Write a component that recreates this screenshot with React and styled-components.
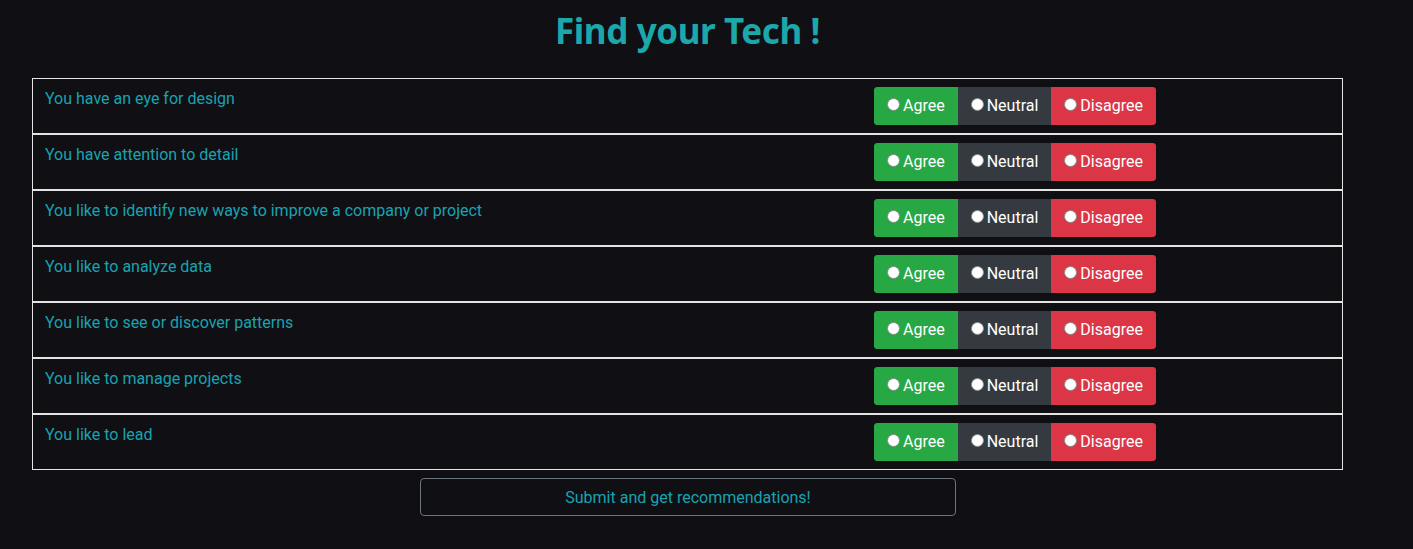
import React from 'react'
import styled, { createGlobalStyle } from 'styled-components'

const GlobalStyle = createGlobalStyle`
    body {
        margin: 0;
        background: #0f0f14;
        font-family: Roboto, "Liberation Sans", sans-serif;
    }
`

const Page = styled.div`
    width: 1311px;
    margin-left: 32px;
    padding-top: 8px;
`

const Title = styled.h1`
    margin: 0 0 24px;
    text-align: center;
    color: #1ca7ab;
    font-family: "Noto Sans", "Open Sans", sans-serif;
    font-weight: 700;
    font-size: 35px;
    line-height: 46px;
    letter-spacing: -0.4px;
`

const Table = styled.div`
    display: flex;
    flex-direction: column;
`

const Row = styled.div`
    display: grid;
    grid-template-columns: 829px 1fr;
    border: 1px solid #e4e4e4;
    padding: 8px 12px;
    height: 56px;
    box-sizing: border-box;
`

const Question = styled.div`
    color: #19a3b0;
    font-size: 16px;
    line-height: 24px;
`

const Group = styled.div`
    display: flex;
    align-self: start;
    border-radius: 4px;
    overflow: hidden;
    width: max-content;
`

const colors = {
    success: '#28a745',
    dark: '#343a40',
    danger: '#dc3545',
}

const Choice = styled.label`
    display: flex;
    align-items: center;
    height: 38px;
    box-sizing: border-box;
    padding: 0 12px 2px;
    border: 1px solid ${p => colors[p.$variant]};
    background: ${p => colors[p.$variant]};
    color: #fff;
    font-size: 16px;
    cursor: pointer;

    input {
        appearance: none;
        width: 13px;
        height: 13px;
        margin: 0 3px 1px 0;
        border-radius: 50%;
        background: #fff;
        border: 1px solid #8a8a8a;
        box-sizing: border-box;
    }
`

const Submit = styled.button`
    display: block;
    width: 536px;
    height: 38px;
    margin: 8px 0 0 388px;
    background: transparent;
    border: 1px solid #6c757d;
    border-radius: 4px;
    color: #19a3b0;
    font-family: Roboto, "Liberation Sans", sans-serif;
    font-size: 16px;
    cursor: pointer;
`

const questions = [
    'You have an eye for design',
    'You have attention to detail',
    'You like to identify new ways to improve a company or project',
    'You like to analyze data',
    'You like to see or discover patterns',
    'You like to manage projects',
    'You like to lead',
]

const App = () => {
    return (
        <Page>
            <GlobalStyle />
            <Title>Find your Tech !</Title>
            <Table>
                {questions.map((q, i) => (
                    <Row key={i}>
                        <Question>{q}</Question>
                        <Group>
                            <Choice $variant="success"><input type="radio" name={`q${i}`} />Agree</Choice>
                            <Choice $variant="dark"><input type="radio" name={`q${i}`} />Neutral</Choice>
                            <Choice $variant="danger"><input type="radio" name={`q${i}`} />Disagree</Choice>
                        </Group>
                    </Row>
                ))}
            </Table>
            <Submit>Submit and get recommendations!</Submit>
        </Page>
    )
}

export default App
